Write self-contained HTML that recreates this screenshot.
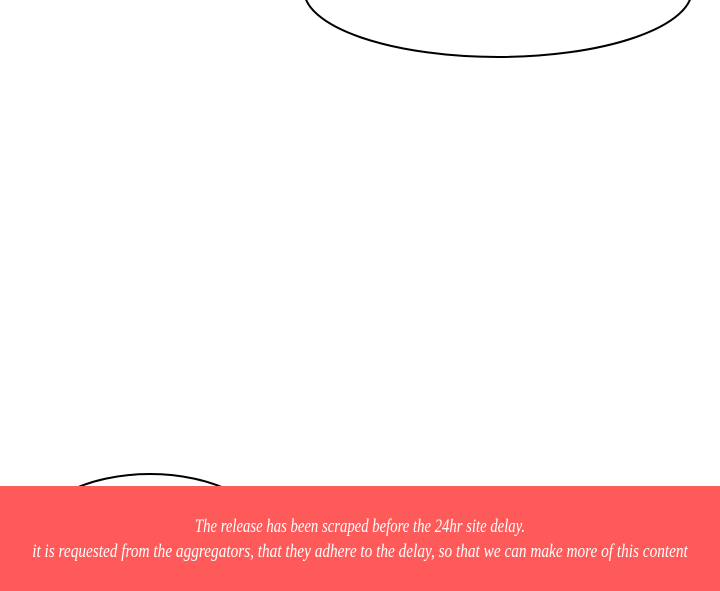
<!DOCTYPE html>
<html><head><style>
html,body{margin:0;padding:0;width:720px;height:591px;overflow:hidden;background:#fff;position:relative}
svg{position:absolute;left:0;top:0}
.band{position:absolute;left:0;top:486px;width:720px;height:105px;background:#ff5a5a}
.t{position:absolute;left:360px;color:#fff;font-family:"Liberation Serif",serif;font-style:italic;font-size:19px;white-space:nowrap;transform:translateX(-50%) scaleX(0.775)}
</style></head><body>
<svg width="720" height="591">
<ellipse cx="498" cy="-10" rx="194" ry="67" fill="none" stroke="#000" stroke-width="2"/>
<ellipse cx="150" cy="540" rx="120" ry="66" fill="none" stroke="#000" stroke-width="2"/>
</svg>
<div class="band"></div>
<div class="t" style="top:516px">The release has been scraped before the 24hr site delay.</div>
<div class="t" style="top:541px;transform:translateX(-50%) scaleX(0.805)">it is requested from the aggregators, that they adhere to the delay, so that we can make more of this content</div>
</body></html>
